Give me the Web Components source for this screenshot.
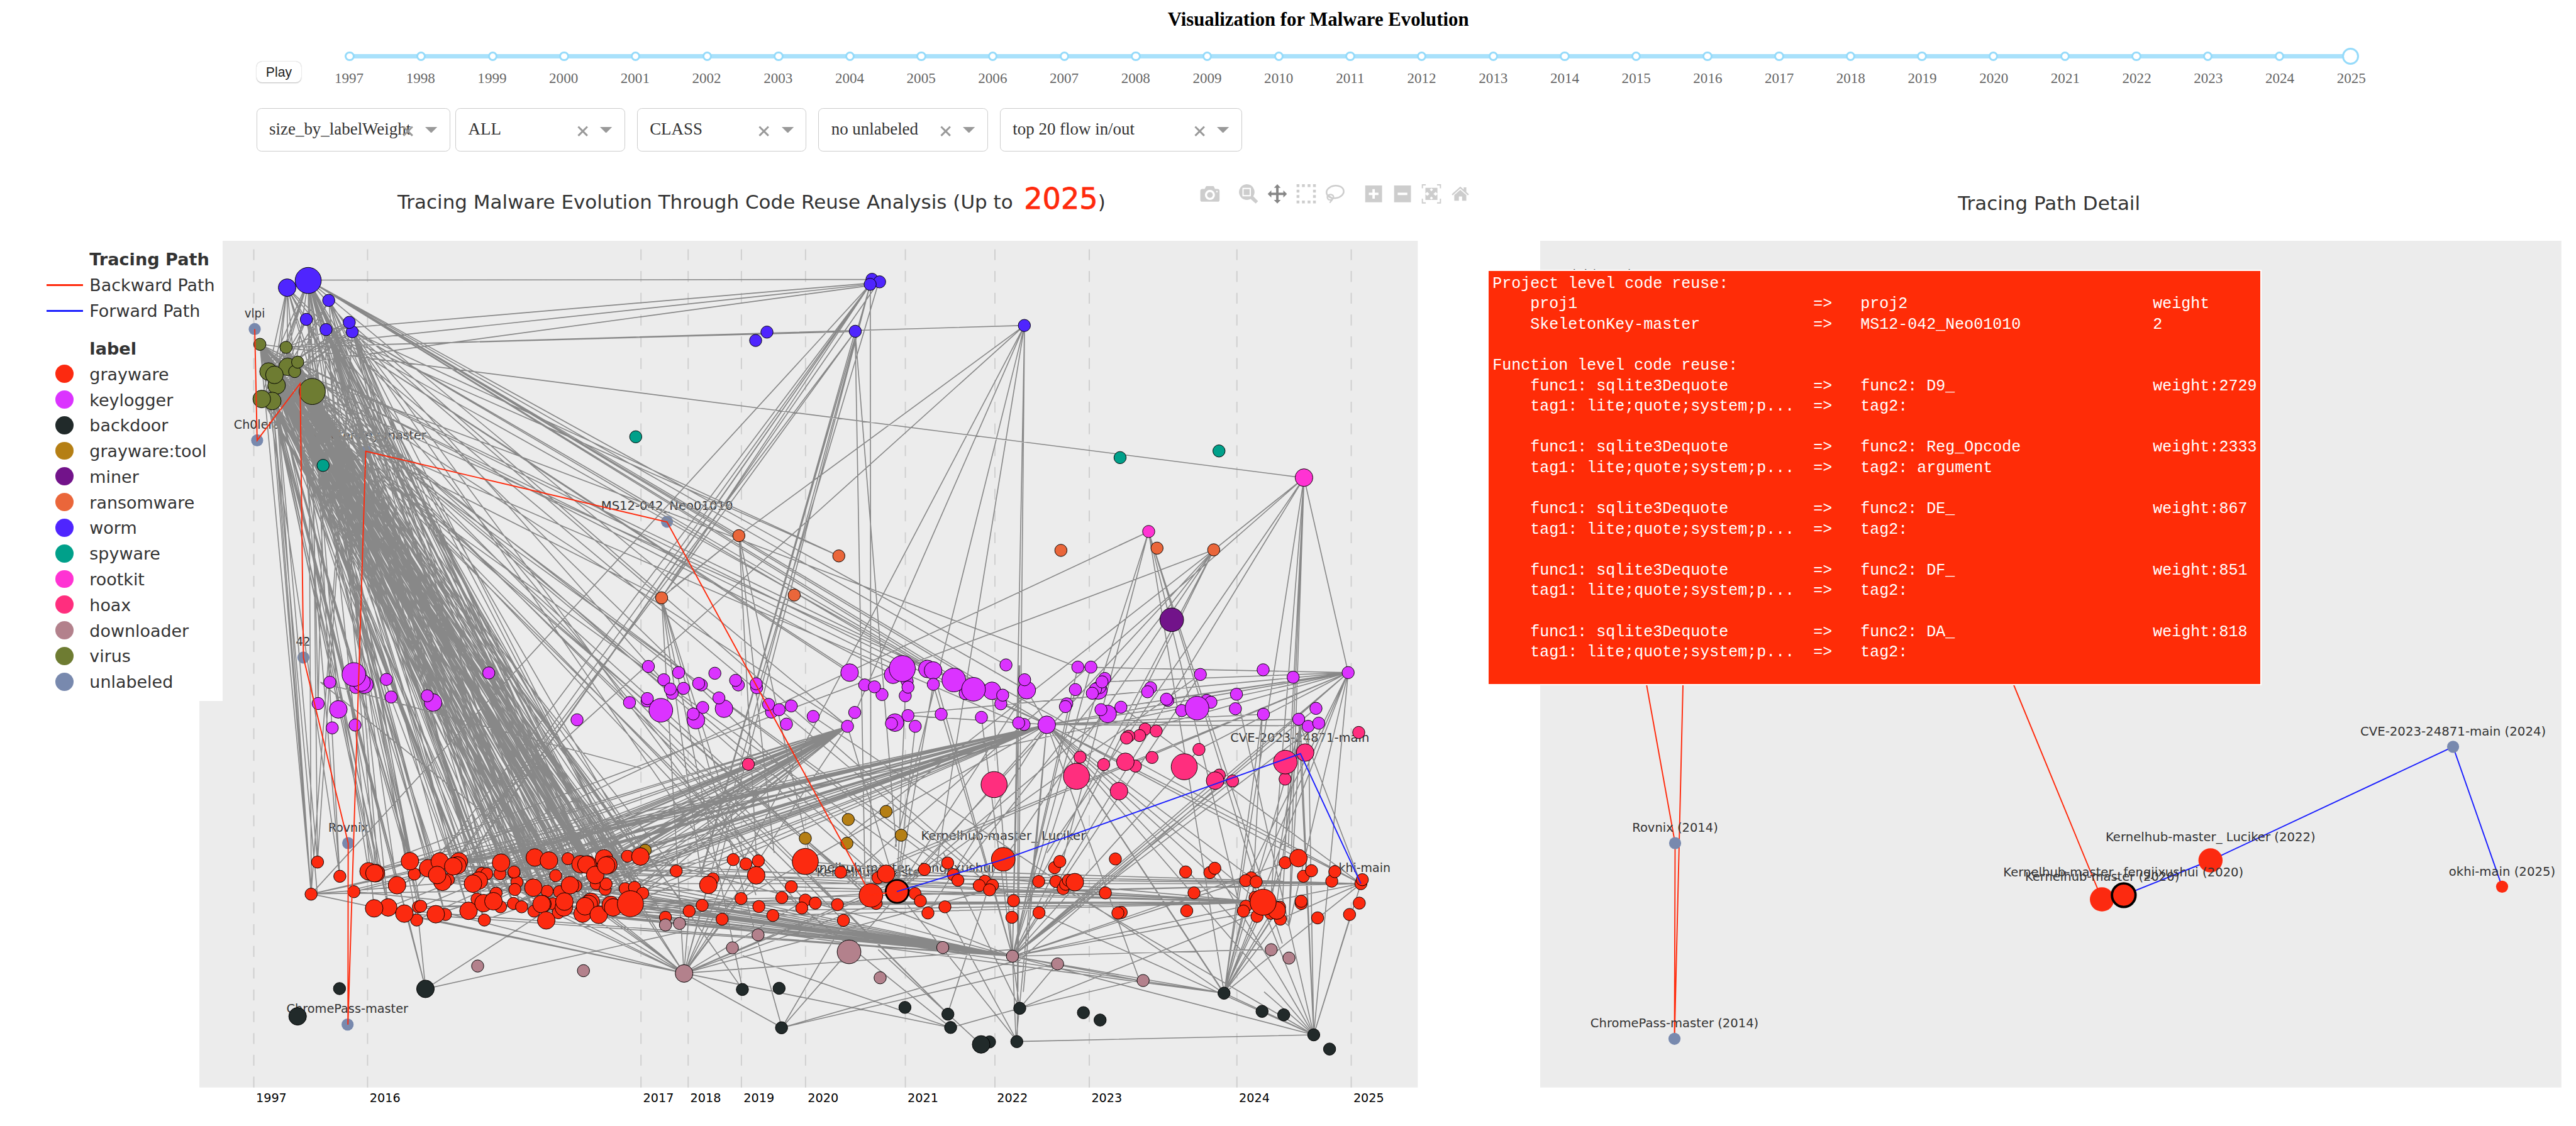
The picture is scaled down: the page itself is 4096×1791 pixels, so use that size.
<!DOCTYPE html>
<html lang="en">
<head>
<meta charset="utf-8">
<title>Visualization for Malware Evolution</title>
<style>
html,body{margin:0;background:#fff;overflow:hidden}
</style>
</head>
<body>
<malware-app></malware-app>
<script>
const SANS = '"DejaVu Sans",sans-serif', SERIF = '"Liberation Serif",serif';
function define(name, css, html) {
  customElements.define(name, class extends HTMLElement {
    constructor() {
      super();
      this.attachShadow({mode: 'open'}).innerHTML = `<style>${css}</style>` + (typeof html === 'function' ? html(this) : html);
    }
  });
}

/* ---------- year slider ---------- */
define('year-slider', `
:host{display:block;width:3308px;font:24px/28px ${SERIF};color:#666}
.rail{height:8px;background:#a9e1fb;display:flex;justify-content:space-between;align-items:center;margin:10px 0}
.rail i{box-sizing:border-box;flex:none;width:16px;height:16px;border:4px solid #96dbfa;border-radius:50%;background:#fff;margin:0 -8px}
.rail i:last-child{width:28px;height:28px;margin:0 -14px}
.years{display:flex;justify-content:space-between;margin:18px -60px 0}
.years span{width:120px;text-align:center;margin:0 -1px}
`, () => {
  const y = Array.from({length: 29}, (_, i) => 1997 + i);
  return `<div class="rail">${y.map(() => '<i></i>').join('')}</div><div class="years">${y.map(v => `<span>${v}</span>`).join('')}</div>`;
});

/* ---------- dropdown ---------- */
define('drop-down', `
:host{box-sizing:border-box;display:flex;align-items:center;height:72px;border:2px solid #ccc;border-radius:8px;background:#fff;padding:0 20px;font:28px/34px ${SERIF};color:#333}
.v{flex:1;min-width:0;white-space:nowrap;overflow:visible;margin-top:-2px}
svg{flex:none;display:block}
.x{margin-right:20px;margin-top:4px}
.c{margin-top:-1px}
`, `<div class="v"><slot></slot></div>
<svg class="x" width="18" height="18" viewBox="0 0 18 18"><path d="M1.5 1.5L16.5 16.5M16.5 1.5L1.5 16.5" stroke="#999" stroke-width="3"/></svg>
<svg class="c" width="20" height="10" viewBox="0 0 20 10"><path d="M0 0H20L10 10Z" fill="#999"/></svg>`);

define('play-button', `
:host{box-sizing:border-box;display:flex;align-items:center;justify-content:center;width:74px;height:34px;border-radius:9px;background:#fff;box-shadow:0 1px 2px #0004,0 0 1px #0003;font:22px/26px "Liberation Sans",sans-serif;color:#222}
`, `<slot></slot>`);

/* ---------- plot toolbar ---------- */
define('mode-bar', `:host{display:block;width:520px;height:80px}svg{display:block}`, `
<svg width="520" height="80" viewBox="0 0 1568 240" fill="#cdcdcd">
<path fill-rule="evenodd" d="M112 98H124L130 86Q131 84 134 84H166Q169 84 170 86L175 98H188Q198 99 198 109V152Q198 162 188 162H112Q102 162 102 152V109Q102 98 112 98ZM150 103A25 25 0 1 0 150 153A25 25 0 1 0 150 103ZM185 107.500A4 4 0 1 0 185 115.500A4 4 0 1 0 185 107.500Z"/><circle cx="150" cy="128" r="14.500"/>
<path fill-rule="evenodd" d="M333 75A39 39 0 1 0 353 148L378 171L390 159L366 135A39 39 0 0 0 333 75ZM312 93H354V135H312ZM318 99V129H348V99Z"/>
<path fill="#868686" d="M486 75L503 93H492V117H516V105L534 123L516 141V129H492V153H503L486 171L469 153H480V129H456V141L438 123L456 105V117H480V93H469Z"/>
<path d="M582 75h14v14h-14zM609 75h14v14h-14zM637 75h14v14h-14zM664 75h14v14h-14zM582 102h14v14h-14zM664 102h14v14h-14zM582 129h14v14h-14zM664 129h14v14h-14zM582 156h14v14h-14zM609 156h14v14h-14zM637 156h14v14h-14zM664 156h14v14h-14z"/>
<g fill="none" stroke="#cdcdcd"><ellipse cx="774" cy="113" rx="43" ry="31" stroke-width="8" transform="rotate(-8 774 113)"/><path d="M738 128C732 140 736 152 748 153C762 154 768 144 766 136C762 124 744 122 738 134M740 134C748 134 762 146 759 153L747 167" stroke-width="7"/></g>
<path fill-rule="evenodd" d="M924 81h84v84h-84zM960 99v18h-18v12h18v18h12v-18h18v-12h-18v-18z"/>
<path fill-rule="evenodd" d="M1068 81h84v84h-84zM1086 117v12h48v-12z"/>
<path fill="none" stroke="#cdcdcd" stroke-width="6" d="M1226 78H1209V95M1282 78H1299V95M1209 147V168H1226M1299 147V168H1282"/>
<path d="M1224 93H1256L1246 102L1254 110L1262 102L1252 93H1284V122L1275 113L1264 123L1275 133L1284 124V153H1252L1262 144L1254 136L1246 144L1256 153H1224V124L1233 133L1244 123L1233 113L1224 122Z"/>
<path d="M1398 86L1415 101V90H1428V113L1441 125L1436 130L1398 96L1360 130L1355 125Z"/><path d="M1398 103L1428 129V157H1407V136H1391V157H1368V129Z"/>
</svg>`);

/* ---------- legend ---------- */
const COLOR = {grayware:'#fc2a10',keylogger:'#db33ff',backdoor:'#212a2a','grayware:tool':'#b57f14',miner:'#72138a',ransomware:'#ea663a',worm:'#4f25fe',spyware:'#00a08a',rootkit:'#ff33d3',hoax:'#ff2e7e',downloader:'#b3818c',virus:'#6e7c32',unlabeled:'#7889ae'};
define('plot-legend', `
:host{box-sizing:border-box;display:block;width:368px;height:761px;padding-top:11px;background:#fff;font:28px/42.400px ${SANS};color:#333}
div{display:flex;align-items:center;height:42.400px;white-space:nowrap}
div::before{content:"";box-sizing:border-box;flex:none;width:60px;height:3px;margin:0 11px 2px 77px;background:var(--c,transparent)}
div.dot::before{width:30px;height:30px;border-radius:50%;margin:0 26px 3px 92px}
b{font-size:28.200px}
.gap{margin-top:20px}
`, `<div><b>Tracing Path</b></div><div style="--c:#ff2a0c">Backward Path</div><div style="--c:#1a1eff">Forward Path</div>
<div class="gap"><b>label</b></div>` + Object.entries(COLOR).map(([n, c]) => `<div class="dot" style="--c:${c}">${n}</div>`).join(''));

/* ---------- node data: [panel, size, points], panels are [x, y, sx, sy] ---------- */
const PANEL = {a:[330,380,.44643,.45918],b:[330,1060,.48469,.5102],c:[1020,380,.44643,.45918],d:[1020,1060,.44643,.5102],e:[1660,380,.45918,.45918],f:[1660,1060,.45918,.5102]};
const R = {s:10.1,m:14.6,l:19.6,x:21.6};
const DATA = {
backdoor:[['b','s','478,1126'],['b','m','771,1127 335,1216'],['d','s','465,1129 601,1125 610,1253 1067,1187 1226,1209 1236,1252 1380,1299 1481,1298 1492,1190'],['d','m','1349,1307'],['f','s','286,1204 346,1228 792,1141 929,1200 1007,1211 1115,1276 1172,1322']],
'grayware:tool':[['d','s','105,678 698,639 852,655 857,578 997,552 1053,629']],
ransomware:[['c','s','452,1101 822,1174 657,1315 166,1325'],['e','s','205,1154 551,1146 755,1152']],
miner:[['e','l','604,1404']],
grayware:[['b','s','403,716 381,820 479,762 527,812 733,755 849,773 839,886 741,904 747,861 755,859 972,904 963,752 980,754 1025,754 1073,751 1083,781 1073,748 1076,805 1012,817 947,836 1027,861 1071,850 1099,861 1215,760 1257,705 1186,810 1228,812 1284,793 1141,875 1206,851 1224,880 1353,786 1384,804 1387,787 1460,697 1452,802 1484,798 1512,817 611,749'],
 ['b','m','577,746 602,752 597,752 674,791 718,713 780,736 820,714 829,780 811,758 885,714 880,727 866,730 644,863 596,866 699,883 806,885 918,874 953,776 933,786 969,849 1003,843 1029,718 1144,701 1192,711 1139,799 1170,852 1167,852 1183,905 1264,791 1300,723 1325,724 1320,724 1350,758 1380,704 1395,725 1387,727 1243,863 1245,844 1335,845 1328,852 1307,883 1315,859 1362,887 1403,855 1411,863 1504,698'],['b','x','1470,851'],
 ['d','s','220,745 356,770 431,708 478,722 524,712 460,834 316,856 268,875 180,895 390,901 611,831 646,796 526,860 578,889 698,839 685,865 735,849 829,749 817,854 839,905 967,767 960,850 1139,740 1225,719 1246,757 1263,775 1104,818 1124,842 1152,881 1215,861 1363,778 1342,792 1391,791 1380,806 1469,841 1463,895'],['d','m','339,790 516,759 997,754'],['d','x','698,714'],['d','l','941,824 1431,707'],
 ['f','s','182,734 201,714 125,779 187,779 213,802 222,788 232,775 365,816 401,706 126,880 422,879 410,881 654,748 741,750 759,736 684,816 658,874 890,767 870,776 908,780 904,830 871,859 862,875 911,892 960,882 992,862 995,901 1012,718 1078,762 1107,744 1070,850 1070,843 1129,897 1180,778 1191,747 1285,786 1290,773 1279,849 1244,886'],['f','m','255,781 1060,703 982,873'],['f','x','933,846']],
keylogger:[['b','s','445,133 533,150 638,124 654,181 405,202 453,281 531,272 987,103 1288,255'],['b','m','474,221 563,141 553,134 797,199'],['b','l','527,108'],['b','s','777,177'],
 ['d','s','117,82 174,125 229,102 205,169 198,155 247,153 313,142 303,137 363,104 450,142 440,127 518,151 516,138 112,194 113,186 47,199 318,215 573,230 562,205 601,222 646,210 628,269 727,244 854,276 881,231 918,142 982,173 954,148 1068,177 1075,130 1078,149 1078,241 1105,276 1201,237 1350,247 1290,170 1441,77 1508,270 1488,265'],
 ['d','m','397,219 293,256 862,102 1023,109 1150,90 1171,95 1389,161 1030,264 1518,159'],['d','l','163,224 1248,126 1321,156'],['d','x','1057,89'],['d','s','378,184 283,236 1017,267 1172,140 1422,203 1429,175 1510,125'],
 ['f','m','340,160 373,236 154,271'],['f','s','266,84 313,84 257,157 363,121 345,150 330,155 353,132 318,169 226,203 221,212 349,222 421,214 528,151 517,164 590,192 585,188 640,225 730,192 745,198 707,108 837,172 833,219 933,93 934,237 1041,117 1061,253 1095,276 1133,266 1123,218 1239,102'],['f','l','695,217']],
worm:[['a','m','325,208'],['a','x','403,182'],['a','s','479,254 396,322 469,359 566,367 555,333'],['c','s','945,178 973,187 938,196 556,368 514,398 883,365 1509,344']],
spyware:[['a','s','458,848'],['c','s','70,745'],['e','s','418,820 774,796']],
rootkit:[['e','m','1080,892'],['e','s','521,1086']],
hoax:[['d','s','487,399'],['d','x','1397,465'],['f','s','274,376 359,400 473,405 508,285 548,291 488,306 449,308 441,314 533,377 702,351 775,434 823,453 1012,447 1277,296'],['f','m','414,486 437,391 760,452 1084,361'],['f','l','1013,392'],['f','x','261,438 649,407']],
downloader:[['b','s','949,1053 1310,1068'],['d','s','180,920 232,915 523,952 428,994 975,1091 1207,993 1465,1021'],['d','m','249,1077'],['d','l','860,1007'],['f','s','193,1046 501,1100 962,1000 1026,1027']],
virus:[['a','s','224,412 321,423'],['a','m','327,493 256,510 286,560 278,522 270,616 231,609'],['a','s','353,510 364,476'],['a','x','418,582']],
};
const NODES = {};
for (const [g, sets] of Object.entries(DATA)) {
  NODES[g] = [];
  for (const [p, s, pts] of sets) {
    const [ox, oy, sx, sy] = PANEL[p];
    for (const t of pts.split(' ')) { const [x, y] = t.split(',').map(Number); NODES[g].push([ox + x * sx, oy + y * sy, R[s]]); }
  }
}

/* ---------- edges ---------- */
function buildEdges() {
  let seed = 20250;
  const rnd = () => (seed = (seed * 16807) % 2147483647) / 2147483647;
  const E = [];
  const add = (x, y, ...t) => { for (let i = 0; i < t.length; i += 2) E.push([x, y, t[i], t[i + 1]]); };
  const fan = (x, y, g, x0, x1, p) => { for (const n of NODES[g]) if (n[0] >= x0 && n[0] < x1 && rnd() < p) E.push([x, y, n[0], n[1]]); };
  /* early worms and viruses feed most later samples */
  const early = [[430,569,.66],[473,574,.34],[476,606,.2],[444,614,.2],[458,637,.2],[454,620,.25],[451,663,.22],[433,660,.12],[488,614,.2],[492,599,.2],[517,647,.4],[510,463,.42],[475,475,.12],[544,497,.11],[507,528,.1],[540,545,.28],[583,548,.09],[578,533,.09]];
  for (const [x, y, p] of early) {
    fan(x, y, 'grayware', 560, 780, p * .42);
    fan(x, y, 'grayware', 780, 880, p * .6);
    fan(x, y, 'grayware', 880, 1090, p * .82);
    fan(x, y, 'grayware', 1090, 1700, p * .09);
    fan(x, y, 'keylogger', 520, 720, p * .12);
    fan(x, y, 'keylogger', 1000, 1800, p * .08);
    fan(x, y, 'grayware', 500, 560, .16);
    fan(x, y, 'virus', 400, 600, .3);
  }
  add(430,569, 2156,790, 515,1478, 515,1478, 1131,1609, 1401,1201, 704,1635);
  add(510,463, 1440,462, 562,1449, 515,1478, 1222,885, 1731,1198);
  add(474,574, 1694,538, 1414,548, 1439,470);
  add(540,545, 1439,468, 1387,919, 1543,1108);
  add(583,548, 1387,919, 1543,1106, 1094,988, 1560,1125);
  add(451,663, 525,1478, 515,1478, 1094,988, 704,1635, 704,1635);
  add(500,600, 1439,472, 1131,1609, 1228,1636, 1567,1676);
  add(530,1128, 1060,1270, 1131,1609);
  /* recent worms */
  add(1439,470, 515,1478, 740,1440, 762,1440, 752,1452, 690,1466, 1094,988, 1094,988, 1170,1410, 1160,1440, 1176,1480, 1440,1480, 1440,1402, 1131,1609);
  add(1414,548, 740,1441, 1170,1410, 1094,988, 1431,1500, 1482,1400, 1160,1445);
  add(1453,466, 1250,1150, 1110,960, 1439,470);
  add(1694,538, 1222,885, 670,1460, 1131,1609, 1404,1201, 1480,1400, 1547,1440, 1683,1640, 1674,1581);
  add(1222,885, 1094,988, 1110,974, 1280,1410, 1340,1420, 1252,1440);
  add(1094,988, 1160,1450, 1250,1480, 1228,1636, 1131,1609, 1293,1699);
  add(1899,879, 678,1450, 1674,1581, 1758,1420, 2050,1500, 2120,1560, 2024,1642, 2090,1500);
  add(2007,909, 675,1410, 1404,1380, 1674,1581, 1674,1581, 1483,1474, 1660,1420, 1580,1450, 1700,1490);
  add(2156,790, 2007,909, 1404,1450, 1731,1410, 1674,1581, 2100,1500, 2024,1642, 2131,1531, 2120,1500, 2229,1112, 2130,1400);
  /* converging hubs */
  fan(1401,1201,'grayware',560,1080,.4);
  fan(1731,1198,'grayware',560,1090,.4);
  fan(1731,1198,'grayware',1090,1700,.07);
  fan(1731,1198,'grayware',2040,2200,.2);
  fan(1731,1198,'keylogger',1500,2160,.17);
  fan(1674,1581,'grayware',560,1200,.26);
  fan(1674,1581,'grayware',1350,1700,.14);
  fan(1674,1581,'grayware',2040,2140,.36);
  fan(1674,1581,'keylogger',1500,2240,.22);
  fan(1674,1581,'hoax',1700,2200,.2);
  fan(2023,1642,'grayware',700,1600,.07);
  fan(2023,1642,'grayware',2050,2140,.6);
  fan(2023,1642,'keylogger',1200,2000,.05);
  fan(2172,1711,'grayware',1700,2160,.12);
  fan(2172,1711,'keylogger',1700,2160,.08);
  fan(2229,1112,'grayware',2040,2240,.2);
  fan(2229,1112,'hoax',1700,2160,.15);
  fan(2229,1112,'keylogger',1700,2160,.1);
  fan(1131,1609,'grayware',1090,1700,.16);
  fan(1131,1609,'grayware',700,1060,.1);
  fan(2250,1461,'grayware',2040,2140,.25);
  fan(2250,1461,'grayware',600,1700,.02);
  fan(2090,1492,'grayware',560,1700,.07);
  fan(515,1478,'grayware',900,1700,.03);
  fan(1483,1474,'keylogger',1400,2160,.1);
  fan(1483,1474,'grayware',560,1090,.06);
  add(1674,1581, 2024,1642, 2024,1642, 2172,1711, 2088,1570, 1686,1100, 1680,1722, 1686,1667, 2229,1112, 1884,1621);
  add(1731,1198, 2172,1711, 2172,1711, 2024,1642, 2131,1531, 2088,1570, 1884,1621, 1680,1722, 1692,1640, 2150,1200, 2147,1189, 2163,1200, 2250,1461, 515,1478, 515,1478, 572,1474, 1293,1699);
  add(1686,1667, 1885,1620, 1748,1593, 1560,1410, 2100,1500);
  add(1682,1722, 2172,1711, 1560,1500, 1684,1100, 1483,1474);
  add(2172,1711, 2150,1200, 2163,1200, 2147,1189, 2234,1510, 2229,1112, 2024,1642, 2090,1640);
  add(1293,1699, 1131,1609, 1674,1590, 1748,1593, 1404,1510);
  add(1572,1699, 1131,1609, 1686,1667, 1228,1580, 1300,1480);
  add(1567,1676, 1650,1420, 1340,1450);
  add(704,1635, 673,1510, 690,1500, 903,1506, 1131,1540);
  add(1622,1727, 1452,1570);
  add(2229,1112, 1674,1581, 1683,1590, 1731,1198, 1483,1420, 2172,1711, 515,1478, 2024,1642, 2131,1531, 1500,1180, 1401,1460);
  add(2150,1200, 2131,1531, 2100,1500, 2110,1500, 2250,1461, 2250,1461, 2024,1642);
  add(2087,1181, 2070,1500, 1731,1198, 2024,1642);
  add(2250,1461, 1660,1140, 2024,1642, 2172,1711, 1853,1168, 2090,1492, 1560,1440);
  add(1131,1609, 608,1500, 700,1500, 1674,1570, 515,1478, 1401,1201);
  return E;
}
const txt = (cx, y, w, s) => `<text x="${cx}" y="${y}" text-anchor="middle" textLength="${w}" lengthAdjust="spacingAndGlyphs">${s}</text>`;
const dot = (x, y, r, c) => `<circle cx="${x.toFixed(1)}" cy="${y.toFixed(1)}" r="${r}" fill="${c}"/>`;

define('evolution-plot', `:host{display:block}svg{display:block}text{font:20px ${SANS};fill:#333}.yr text{fill:#000}`, () => {
  const years = [[420,1997],[608,2016],[1060,2017],[1138,2018],[1226,2019],[1332,2020],[1497,2021],[1645,2022],[1801,2023],[2045,2024],[2234,2025]];
  const U = COLOR.unlabeled;
  return `<svg width="2110" height="1464" viewBox="330 398 2110 1464">
<rect x="330" y="398" width="2014" height="1400" fill="#ececec"/>
<g stroke="#cfcfcf" stroke-width="2" stroke-dasharray="18 18">${years.map(([x]) => `<path d="M${x} 1798V398"/>`).join('')}</g>
<g>${dot(421.5,544,10,U)}${dot(425.5,728,10,U)}${dot(496.6,634,10,U)}${dot(502,1087,10,U)}${dot(576,1394,10,U)}${dot(575,1694,10,U)}${dot(605.5,746,10,U)}${dot(1103,862.5,10,U)}${dot(2149,1246,10,U)}</g>
<g>${txt(421.5,525,34,'vlpi')}${txt(425.5,709,77,'Ch0lera')}${txt(501.6,1068,24,'42')}${txt(576,1375,66,'Rovnix')}${txt(574.6,1675,201,'ChromePass-master')}${txt(605.5,727,199,'SkeletonKey-master')}${txt(1103,843,218,'MS12-042_Neo01010')}${txt(1659,1389,272,'Kernelhub-master_ Luciker')}${txt(1483,1442,322,'Kernelhub-master_ fengjixushui')}${txt(1440,1449,180,'Kernelhub-master')}${txt(2149,1227,230,'CVE-2023-24871-main')}${txt(2250,1442,98,'okhi-main')}</g>
<path fill="none" stroke="#888" stroke-width="1.700" d="${buildEdges().map(e => `M${e[0].toFixed(1)} ${e[1].toFixed(1)}L${e[2].toFixed(1)} ${e[3].toFixed(1)}`).join('')}"/>
<g stroke="#000" stroke-width="1">${Object.entries(NODES).map(([g, ns]) => ns.map(n => dot(n[0], n[1], n[2], COLOR[g])).join('')).join('')}</g>
<circle cx="1483.400" cy="1473.800" r="19" fill="${COLOR.grayware}" stroke="#000" stroke-width="3"/>
<path fill="none" stroke="#ff2a0c" stroke-width="2" d="M421.500 544L425.500 728L496.600 634L502 1087L576 1394L575.600 1694L605 746L1103 863L1440 1480L1483 1474"/>
<path fill="none" stroke="#1a1eff" stroke-width="2" d="M1483 1474L1659 1421L2150 1246L2250 1461"/>
<g class="yr">${years.map(([x, y]) => `<text x="${x + 3.5}" y="1822">${y}</text>`).join('')}</g>
</svg>`;
});

define('path-plot', `:host{display:block}svg{display:block}text{font:20px ${SANS};fill:#333}`, () => {
  const U = COLOR.unlabeled, G = COLOR.grayware;
  return `<svg width="1712" height="1464" viewBox="2546 398 1712 1464">
<rect x="2546" y="398" width="1688" height="1400" fill="#ececec"/>
<path fill="none" stroke="#ff2a0c" stroke-width="2" d="M2643 479L2652 660L2688 780L2722 1133L2769 1394L2768 1717L2782 1133L2790 700L3160 860L3329 1133L3474.600 1487L3510 1480"/>
<path fill="none" stroke="#1a1eff" stroke-width="2" d="M3510.600 1480L3654 1422.500L4055 1234.700L4136 1466"/>
${dot(2769,1394,10,U)}${dot(2768,1717.5,10,U)}${dot(3474.6,1487,20,G)}<circle cx="3510.600" cy="1480" r="19.500" fill="${G}" stroke="#000" stroke-width="4"/>${dot(3654,1422.5,20,G)}${dot(4055,1234.7,10,U)}${dot(4136,1466,10,G)}
${txt(2643,460,111,'vlpi (1997)')}${txt(2769,1375,142,'Rovnix (2014)')}${txt(2768,1698,278,'ChromePass-master (2014)')}${txt(3510,1449,397,'Kernelhub-master_ fengjixushui (2020)')}${txt(3475,1456,255,'Kernelhub-master (2020)')}${txt(3654,1391,347,'Kernelhub-master_ Luciker (2022)')}${txt(4055,1216,307,'CVE-2023-24871-main (2024)')}${txt(4136,1448,176,'okhi-main (2025)')}
</svg>`;
});

/* ---------- code reuse tooltip ---------- */
define('reuse-tip', `
:host{display:block;box-sizing:border-box;width:1279px;height:687px;background:#ff2c07;border:3px solid #fff;padding:5px 0 0 6px}
pre{margin:0;font:26px/33.860px "Liberation Mono",monospace;color:#fff}
`, () => {
  const row = (a, b, w = '') => '    ' + a.padEnd(30) + '=>   ' + b.padEnd(31) + w;
  const L = ['Project level code reuse:', row('proj1', 'proj2', 'weight'), row('SkeletonKey-master', 'MS12-042_Neo01010', '2'), '', 'Function level code reuse:'];
  for (const [f, t, w] of [['D9_','',2729],['Reg_Opcode',' argument',2333],['DE_','',867],['DF_','',851],['DA_','',818]])
    L.push(row('func1: sqlite3Dequote', 'func2: ' + f, 'weight:' + w), row('tag1: lite;quote;system;p...', 'tag2:' + t), '');
  return `<pre>${L.map(s => s.trimEnd().replace('=>', '=&gt;')).join('\n')}</pre>`;
});

/* ---------- page ---------- */
define('malware-app', `
:host{display:block;width:4258px;height:1862px;zoom:.96195;position:relative;background:#fff}
h1{margin:0;height:63px;padding:15px 0 0 100px;box-sizing:border-box;text-align:center;font:bold 32px/36px ${SERIF};color:#000}
.time{display:flex;align-items:flex-start;height:116px;padding:16px 0 0 424px;box-sizing:border-box}
play-button{margin-top:23px}
year-slider{margin-left:80px}
.filters{display:flex;padding-left:424px;height:91px}
.charts{display:flex;align-items:flex-start}
.title{box-sizing:border-box;height:128px;display:flex;font:32.200px/44px ${SANS};color:#333;white-space:nowrap}
.left{width:2546px}
.left .title{padding-left:657px}
.t1{margin-top:32px;width:1293px;line-height:56px}
.t1 b{font-weight:normal;font-size:48px;color:#ff2a0c;-webkit-text-stroke:.800px #ff2a0c;margin-left:8px}
.left mode-bar{margin-top:10px}
.body{display:flex;align-items:flex-start}
plot-legend{position:relative;z-index:1;flex:none}
evolution-plot{margin-left:-38px}
.right{width:1712px}
.right .title{justify-content:center;padding:44px 30px 0 0}
reuse-tip{position:absolute;left:2459px;top:446px}
`, `<h1>Visualization for Malware Evolution</h1>
<div class="time"><play-button>Play</play-button><year-slider></year-slider></div>
<div class="filters">
<drop-down style="width:320px">size_by_labelWeight</drop-down>
<drop-down style="width:280px;margin-left:9px">ALL</drop-down>
<drop-down style="width:280px;margin-left:20px">CLASS</drop-down>
<drop-down style="width:280px;margin-left:20px">no unlabeled</drop-down>
<drop-down style="width:400px;margin-left:20px">top 20 flow in/out</drop-down>
</div>
<div class="charts">
<div class="left"><div class="title"><div class="t1">Tracing Malware Evolution Through Code Reuse Analysis (Up to <b>2025</b>)</div><mode-bar></mode-bar></div>
<div class="body"><plot-legend></plot-legend><evolution-plot></evolution-plot></div></div>
<div class="right"><div class="title">Tracing Path Detail</div><path-plot></path-plot></div>
</div>
<reuse-tip></reuse-tip>`);
</script>
</body>
</html>
